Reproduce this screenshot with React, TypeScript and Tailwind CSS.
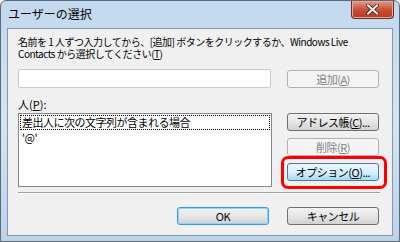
import React from "react";

const FONT = { fontFamily: '"Noto Sans CJK JP", "Liberation Sans", sans-serif' };

function Btn({
  children,
  disabled,
  hot,
  def,
}: {
  children: React.ReactNode;
  disabled?: boolean;
  hot?: boolean;
  def?: boolean;
}) {
  let cls =
    "flex h-[18px] w-[92px] items-center justify-center rounded-[3px] border text-[11px] leading-none tracking-[-0.5px] ";
  if (disabled) {
    cls += "border-[#adb2b5] bg-[#f4f4f4] text-[#838383]";
  } else if (hot) {
    cls +=
      "border-[#3c7fb1] bg-gradient-to-b from-[#eaf6fd] via-[#d9f0fc] to-[#a7d9f5] text-black";
  } else if (def) {
    cls +=
      "border-[#3399ff] bg-gradient-to-b from-[#f2f2f2] via-[#e6e6e6] to-[#d2d2d2] text-black shadow-[inset_0_0_0_1px_#93d4f4]";
  } else {
    cls +=
      "border-[#707070] bg-gradient-to-b from-[#f2f2f2] via-[#e6e6e6] to-[#d2d2d2] text-black";
  }
  return <div className={cls}>{children}</div>;
}

export default function App() {
  return (
    <div className="h-[242px] w-[400px] overflow-hidden bg-white" style={FONT}>
      <div className="flex h-[242px] w-[400px] flex-col rounded-t-[6px] border border-[#5f6a77] bg-gradient-to-b from-[#c2d8ee] via-[#d3e4f4] to-[#bcd3ea]">
        {/* title bar */}
        <div className="flex h-[27px] items-start justify-between">
          <div className="pl-[7px] pt-[4px] text-[12px] text-black">
            ユーザーの選択
          </div>
          <div className="mr-[5px] flex h-[18px] w-[43px] items-center justify-center rounded-b-[4px] border border-t-0 border-[#6b2a22] bg-gradient-to-b from-[#e29a8a] via-[#c9503a] to-[#b8361c] shadow-[inset_0_0_0_1px_#eaa899]">
            <svg width="13" height="11" viewBox="0 0 13 11">
              <path
                d="M2 1.5 L11 9.5 M11 1.5 L2 9.5"
                stroke="#4a1a12"
                strokeWidth="3.6"
                strokeLinecap="square"
              />
              <path
                d="M2 1.5 L11 9.5 M11 1.5 L2 9.5"
                stroke="#ffffff"
                strokeWidth="2"
                strokeLinecap="square"
              />
            </svg>
          </div>
        </div>

        {/* client area */}
        <div className="mx-[6px] mb-[5px] flex flex-1 flex-col border border-[#8497ad] bg-[#f0f0f0] px-[10px] pt-[7px] text-[11px] text-black">
          <div className="whitespace-pre text-[10px] leading-[12px] tracking-[-0.5px]">
            {"名前を 1 人ずつ入力してから、[追加] ボタンをクリックするか、Windows Live"}
            <br />
            {"Contacts から選択してください("}
            <span className="underline">T</span>)
          </div>

          <div className="mt-[9px] flex items-start justify-between">
            <div className="h-[19px] w-[253px] rounded-[2px] border border-[#c3cad3] bg-white" />
            <div className="mr-[3px] mt-[1px]">
              <Btn disabled>
                追加(<span className="underline">A</span>)
              </Btn>
            </div>
          </div>

          <div className="mt-[10px] leading-[12px]">
            人(<span className="underline">P</span>):
          </div>

          <div className="mt-[3px] flex items-start justify-between">
            <div className="h-[74px] w-[254px] border border-[#828790] bg-white px-[1px] pt-[1px] leading-[12px] tracking-[-0.5px]">
              <div className="border border-dotted border-black px-[1px] pb-[1px]">
                差出人に次の文字列が含まれる場合
              </div>
              <div className="px-[2px] pt-[1px]">'@'</div>
            </div>
            <div className="relative mr-[3px] flex flex-col gap-[7px]">
              <Btn>
                アドレス帳(<span className="underline">C</span>)...
              </Btn>
              <Btn disabled>
                削除(<span className="underline">R</span>)
              </Btn>
              <Btn hot>
                オプション(<span className="underline">O</span>)...
              </Btn>
              <div className="pointer-events-none absolute left-[-6px] top-[43px] h-[33px] w-[106px] rounded-[7px] border-[3px] border-[#ff0000]" />
            </div>
          </div>

          <div className="mr-[2px] mt-[5px] h-[2px] border-b border-t border-b-white border-t-[#a0a0a0]" />

          <div className="mr-[3px] mt-[13px] flex justify-end gap-[18px]">
            <Btn def>OK</Btn>
            <Btn>キャンセル</Btn>
          </div>
        </div>
      </div>
    </div>
  );
}
